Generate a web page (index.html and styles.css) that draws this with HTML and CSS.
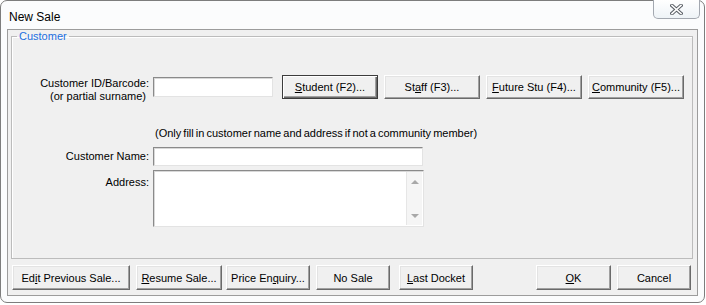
FILE: index.html
```html
<!DOCTYPE html>
<html>
<head>
	<title>New Sale</title>
	<meta charset="UTF-8">
	<link rel="stylesheet" href="styles.css">
</head>
<body>
	<div class="window">
		<div class="titlebar">
			<span class="title">New Sale</span>
			<span class="close">
				<svg width="13" height="11" viewBox="0 0 13 11">
					<path d="M2 1.5 L11 9.5 M11 1.5 L2 9.5" stroke="#5a5f66" stroke-width="3.6" stroke-linecap="square" fill="none"/>
					<path d="M2 1.5 L11 9.5 M11 1.5 L2 9.5" stroke="#ffffff" stroke-width="1.6" stroke-linecap="square" fill="none"/>
				</svg>
			</span>
		</div>
		<div class="client">
			<fieldset class="group">
				<legend>Customer</legend>
				<div class="row row-id">
					<label class="lbl">Customer ID/Barcode:<br><span class="sub">(or partial surname)</span></label>
					<div class="edit edit-id"></div>
					<div class="btn-set">
						<button class="btn default"><u>S</u>tudent (F2)...</button>
						<button class="btn">St<u>a</u>ff (F3)...</button>
						<button class="btn"><u>F</u>uture Stu (F4)...</button>
						<button class="btn"><u>C</u>ommunity (F5)...</button>
					</div>
				</div>
				<p class="note">(Only fill in customer name and address if not a community member)</p>
				<div class="row row-name">
					<label class="lbl">Customer Name:</label>
					<div class="edit edit-name"></div>
				</div>
				<div class="row row-addr">
					<label class="lbl">Address:</label>
					<div class="edit memo">
						<div class="vscroll">
							<span class="arr up"></span>
							<span class="arr down"></span>
						</div>
					</div>
				</div>
			</fieldset>
			<div class="footer">
				<button class="btn b-edit">Ed<u>i</u>t Previous Sale...</button>
				<button class="btn b-resume"><u>R</u>esume Sale...</button>
				<button class="btn b-price">Price En<u>q</u>uiry...</button>
				<button class="btn b-nosale">No Sale</button>
				<button class="btn b-docket"><u>L</u>ast Docket</button>
				<button class="btn b-ok"><u>O</u>K</button>
				<button class="btn b-cancel">Cancel</button>
			</div>
		</div>
	</div>
</body>
</html>
```

FILE: styles.css
```css
body {
	margin: 0;
	padding: 0;
	background-color: #fff;
	font-family: "Liberation Sans", Arial, sans-serif;
	font-size: 11px;
	color: #000;
}

.window {
	width: 705px;
	height: 303px;
	box-sizing: border-box;
	border: 1px solid #7d7d7d;
	border-radius: 7px;
	background-color: #fbfcfd;
	display: flex;
	flex-direction: column;
}

.titlebar {
	height: 28px;
	display: flex;
	justify-content: space-between;
	align-items: flex-start;
	padding-left: 8px;
}

.title {
	font-size: 12px;
	line-height: 14px;
	padding-top: 9px;
}

.close {
	width: 47px;
	height: 19px;
	box-sizing: border-box;
	margin: -1px 4px 0 0;
	border: 1px solid #a3a8b0;
	border-top: none;
	border-radius: 0 0 5px 5px;
	background: linear-gradient(#ffffff, #eef3f7);
	display: flex;
	align-items: center;
	justify-content: center;
	padding-top: 1px;
}

.client {
	flex: 1;
	margin: 0 6px 6px 6px;
	border: 1px solid #9c9c9c;
	background-color: #f0f0f0;
	display: flex;
	flex-direction: column;
}

.group {
	margin: 0 4px 0 3px;
	padding: 0;
	height: 229px;
	box-sizing: border-box;
	border: 1px solid #bcbcbc;
	box-shadow: inset 1px 1px 0 #fff;
	min-width: 0;
}

.group legend {
	margin-left: 5px;
	padding: 0 2px;
	line-height: 13px;
	color: #1c6fe0;
}

.row {
	display: flex;
	align-items: flex-start;
}

.lbl {
	width: 137px;
	margin-right: 4px;
	text-align: right;
	line-height: 13px;
}

.lbl .sub {
	padding-right: 3px;
}

.edit {
	box-sizing: border-box;
	background-color: #fff;
	border: 1px solid;
	border-color: #8a8a8a #e3e3e3 #e3e3e3 #8a8a8a;
	box-shadow: inset 1px 1px 0 #d8d8d8;
}

.row-id {
	margin-top: 32px;
}

.row-id .lbl {
	margin-top: 2px;
}

.edit-id {
	width: 120px;
	height: 20px;
	margin-top: 2px;
}

.btn-set {
	display: flex;
	gap: 6px;
	margin-left: 9px;
}

.btn {
	font-family: "Liberation Sans", Arial, sans-serif;
	font-size: 11px;
	color: #000;
	height: 25px;
	box-sizing: border-box;
	padding: 0;
	background-color: #f0f0f0;
	border: 1px solid;
	border-color: #ffffff #6a6a6a #6a6a6a #ffffff;
	box-shadow: inset -1px -1px 0 #a0a0a0, inset 1px 1px 0 #e3e3e3;
}

.btn-set .btn {
	width: 96px;
	height: 24px;
}

.btn.default {
	border-color: #3c3c3c;
	box-shadow: inset 1px 1px 0 #ffffff, inset -1px -1px 0 #6a6a6a, inset -2px -2px 0 #a0a0a0;
}

.note {
	margin: 24px 0 0 143px;
	line-height: 13px;
	word-spacing: -1px;
}

.row-name {
	margin-top: 7px;
}

.row-name .lbl {
	margin-top: 3px;
}

.edit-name {
	width: 270px;
	height: 19px;
}

.row-addr {
	margin-top: 4px;
}

.row-addr .lbl {
	margin-top: 6px;
}

.memo {
	width: 271px;
	height: 57px;
	display: flex;
	justify-content: flex-end;
	padding: 1px 1px 1px 0;
}

.vscroll {
	width: 15px;
	background-color: #f5f5f5;
	border-left: 1px solid #e6e6e6;
	display: flex;
	flex-direction: column;
	justify-content: space-between;
	align-items: center;
	padding: 8px 0 7px;
}

.arr {
	width: 0;
	height: 0;
	border-left: 4px solid transparent;
	border-right: 4px solid transparent;
}

.arr.up {
	border-bottom: 4px solid #a8a8a8;
}

.arr.down {
	border-top: 4px solid #a8a8a8;
}

.footer {
	display: flex;
	margin: 6px 0 0 4px;
}

.b-edit { width: 118px; }
.b-resume { width: 86px; margin-left: 6px; }
.b-price { width: 84px; margin-left: 4px; }
.b-nosale { width: 74px; margin-left: 6px; }
.b-docket { width: 74px; margin-left: 9px; }
.b-ok { width: 75px; margin-left: 63px; }
.b-cancel { width: 74px; margin-left: 6px; }
```
